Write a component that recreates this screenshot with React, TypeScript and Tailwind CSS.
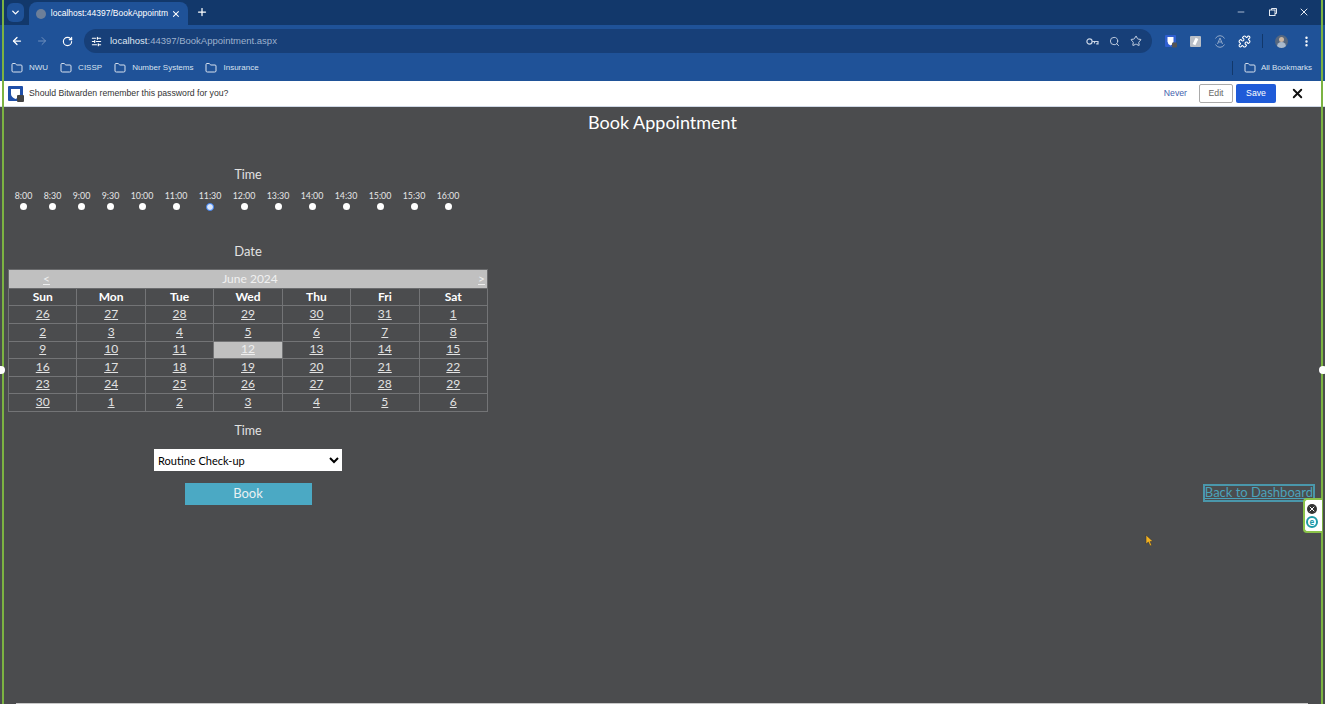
import React from 'react';
import { ArrowLeft, ArrowRight, RotateCw, Folder, ChevronDown, X, Plus, Minus, Search, Star, EllipsisVertical, SlidersHorizontal, Puzzle } from 'lucide-react';

const pageFont = "font-['Lato','Open_Sans',sans-serif]";

const times = [
  { label: '8:00', w: 'w-[29px]' },
  { label: '8:30', w: 'w-[29px]' },
  { label: '9:00', w: 'w-[29px]' },
  { label: '9:30', w: 'w-[29px]' },
  { label: '10:00', w: 'w-[34px]' },
  { label: '11:00', w: 'w-[34px]' },
  { label: '11:30', w: 'w-[34px]' },
  { label: '12:00', w: 'w-[34px]' },
  { label: '13:30', w: 'w-[34px]' },
  { label: '14:00', w: 'w-[34px]' },
  { label: '14:30', w: 'w-[34px]' },
  { label: '15:00', w: 'w-[34px]' },
  { label: '15:30', w: 'w-[34px]' },
  { label: '16:00', w: 'w-[34px]' },
];

const days = ['Sun', 'Mon', 'Tue', 'Wed', 'Thu', 'Fri', 'Sat'];

const weeks = [
  { h: 'h-[18px]', cells: [26, 27, 28, 29, 30, 31, 1] },
  { h: 'h-[18px]', cells: [2, 3, 4, 5, 6, 7, 8] },
  { h: 'h-[17px]', cells: [9, 10, 11, 12, 13, 14, 15] },
  { h: 'h-[18px]', cells: [16, 17, 18, 19, 20, 21, 22] },
  { h: 'h-[17px]', cells: [23, 24, 25, 26, 27, 28, 29] },
  { h: 'h-[18px]', cells: [30, 1, 2, 3, 4, 5, 6] },
];

const bookmarks = ['NWU', 'CISSP', 'Number Systems', 'Insurance'];

const BrowserChrome = () => {
  return (
    <div className="font-['Liberation_Sans',sans-serif] text-white">
      {/* tab strip */}
      <div className="h-[25px] bg-[#12386b] flex items-end pl-[7px]">
        <div className="w-[17px] h-[19px] mb-[3px] rounded-md bg-[#1f5298] flex items-center justify-center">
          <ChevronDown size={11} strokeWidth={3} />
        </div>
        <div className="ml-[5px] w-[159px] h-[23px] bg-[#1f5298] rounded-t-lg flex items-center pl-[7px] pr-[7px]">
          <div className="w-[10px] h-[10px] rounded-full bg-[#6d7f99]" />
          <span className="ml-[5px] text-[8.5px] whitespace-nowrap w-[122px]">localhost:44397/BookAppointm</span>
          <X size={10} strokeWidth={2.5} />
        </div>
        <Plus size={12} strokeWidth={2.5} className="ml-[8px] mb-[7px]" />
        <div className="ml-auto flex items-center mb-[7px]">
          <Minus size={10} className="text-[#c8d4e6]" />
          <svg className="ml-[22px]" width="10" height="10" viewBox="0 0 10 10" fill="none" stroke="#e4e9f1">
            <rect x="1.5" y="3" width="5.5" height="5.5" />
            <path d="M3.5 3 V1.5 H8.5 V6.5 H7" />
          </svg>
          <X size={12} className="ml-[20px] mr-[15px] text-[#e4e9f1]" />
        </div>
      </div>
      {/* toolbar */}
      <div className="h-[29px] bg-[#1f5298] flex items-center pl-[11px] pt-[3px]">
        <ArrowLeft size={12} strokeWidth={2.5} />
        <ArrowRight size={12} strokeWidth={2} className="ml-[13px] text-[#6f8fbd]" />
        <RotateCw size={11} strokeWidth={2.5} className="ml-[14px]" />
        <div className="ml-[11px] w-[1068px] h-[24px] rounded-full bg-[#173f78] flex items-center pl-[7px]">
          <SlidersHorizontal size={11} strokeWidth={2.5} />
          <span className="ml-[8px] text-[9.5px] text-[#dfe6f1]">localhost<span className="text-[#9db1cd]">:44397/BookAppointment.aspx</span></span>
          <div className="ml-auto flex items-center pr-[10px] text-[#c9d4e5]">
            <svg width="13" height="9" viewBox="0 0 13 9" fill="none" stroke="#c9d4e5" strokeWidth="1.2">
              <circle cx="3.5" cy="4.5" r="2.6" />
              <path d="M6.1 4.5 H12 V6.8 H10.2 M8.5 4.5 V6.5" />
            </svg>
            <Search size={11} className="ml-[10px]" />
            <Star size={12} className="ml-[10px]" />
          </div>
        </div>
        {/* extension icons */}
        <svg className="ml-[13px]" width="12" height="13" viewBox="0 0 12 13">
          <rect width="11" height="12" rx="1" fill="#2f5fd0" />
          <path d="M2.5 2 H8.5 V6.5 Q8.5 9 5.5 10.5 Q2.5 9 2.5 6.5 Z" fill="#fff" />
          <rect x="7" y="7.5" width="5" height="5" rx="1" fill="#555" />
        </svg>
        <div className="ml-[13px] w-[11px] h-[11px] rounded-[1px] bg-[#b9bec6] flex items-center justify-center">
          <div className="w-[3px] h-[7px] bg-white rotate-[25deg]" />
        </div>
        <svg className="ml-[13px]" width="12" height="13" viewBox="0 0 12 13" fill="none" stroke="#9db1cd" strokeWidth="0.9">
          <path d="M1.5 3.5 A5 5 0 0 1 10.5 3.5 M1.5 9.5 A5 5 0 0 0 10.5 9.5 M6 3 L3.5 9 M6 3 L8.5 9 M4.5 7 H7.5" />
        </svg>
        <Puzzle size={13} strokeWidth={2} className="ml-[12px]" />
        <div className="ml-[11px] w-px h-[14px] bg-[#12386b]" />
        <div className="relative ml-[12px] w-[13px] h-[13px] rounded-full bg-[#55677f] overflow-hidden">
          <div className="absolute left-[4px] top-[2px] w-[5px] h-[5px] rounded-full bg-[#c9b5a2]" />
          <div className="absolute left-[2px] top-[7px] w-[9px] h-[6px] rounded-t-full bg-[#a9b9cc]" />
        </div>
        <EllipsisVertical size={13} strokeWidth={2.5} className="ml-[12px]" />
      </div>
      {/* bookmarks */}
      <div className="h-[27px] bg-[#1f5298] flex items-center pl-[11px] pt-[1px] text-[8px] text-[#d9e2ef]">
        {bookmarks.map((name) => (
          <div key={name} className="flex items-center mr-[12px]">
            <Folder size={12} className="mr-[6px]" />
            <span>{name}</span>
          </div>
        ))}
        <div className="ml-auto w-px h-[14px] bg-[#12386b] mr-[11px]" />
        <Folder size={12} className="mr-[5px]" />
        <span className="mr-[13px]">All Bookmarks</span>
      </div>
    </div>
  );
};

const BitwardenBar = () => {
  return (
    <div className="h-[26px] bg-white border-b border-[#cfd8e6] flex items-center pl-[8px] pr-[20px] font-['Liberation_Sans',sans-serif] text-[8.7px] text-[#333]">
      <svg width="16" height="16" viewBox="0 0 16 16">
        <rect width="15" height="15" rx="1" fill="#1f4fa8" />
        <path d="M3 3 H12 V8 Q12 11 7.5 13 Q3 11 3 8 Z" fill="#fff" />
        <rect x="9" y="9" width="7" height="7" rx="1" fill="#444" />
      </svg>
      <span className="ml-[5px]">Should Bitwarden remember this password for you?</span>
      <span className="ml-auto text-[#3f62ad]">Never</span>
      <span className="ml-[12px] w-[34px] h-[19px] border border-[#aaa] rounded-[2px] flex items-center justify-center text-[#666]">Edit</span>
      <span className="ml-[3px] w-[40px] h-[19px] bg-[#1f5bd8] rounded-[2px] flex items-center justify-center text-white">Save</span>
      <X size={15} strokeWidth={3} className="ml-[14px] text-[#111]" />
    </div>
  );
};

const TimePicker = () => {
  return (
    <div className="flex ml-[9px] mt-[5px]">
      {times.map((t) => (
        <div key={t.label} className={`${t.w} flex flex-col items-center`}>
          <span className="text-[8.8px] leading-[13px] text-[#e6e6e6]">{t.label}</span>
          {t.label === '11:30' ? (
            <span className="mt-[1px] w-[8px] h-[8px] rounded-full bg-[#dbe7fb] border-[1.5px] border-[#3b82f6]" />
          ) : (
            <span className="mt-[1px] w-[7px] h-[7px] rounded-full bg-white" />
          )}
        </div>
      ))}
    </div>
  );
};

const Calendar = () => {
  return (
    <table className="ml-[8px] w-[480px] table-fixed border-collapse text-[#e2e2e2]">
      <thead>
        <tr>
          <th colSpan={7} className="h-[19px] p-0 bg-[#c0c0c0] border border-[#6a6b6d] font-normal text-[12px]">
            <div className="flex items-center px-[34px] pr-[2px]">
              <a className="underline text-[#eee]">&lt;</a>
              <span className="flex-1 text-center text-[#f0f0f0] pr-[28px]">June 2024</span>
              <a className="underline text-[#eee]">&gt;</a>
            </div>
          </th>
        </tr>
        <tr>
          {days.map((d) => (
            <th key={d} className="h-[17px] p-0 border border-[#737476] text-[12px] leading-none font-bold text-white">{d}</th>
          ))}
        </tr>
      </thead>
      <tbody>
        {weeks.map((week, i) => (
          <tr key={i}>
            {week.cells.map((day, j) => (
              <td
                key={j}
                className={`${week.h} px-0 pt-0 pb-[2px] border border-[#737476] text-center text-[12px] leading-none ${i === 2 && day === 12 ? 'bg-[#c0c0c0] text-[#eee]' : ''}`}
              >
                <a className="underline">{day}</a>
              </td>
            ))}
          </tr>
        ))}
      </tbody>
    </table>
  );
};

const App = () => {
  return (
    <div className="relative w-[1325px] h-[704px] overflow-hidden bg-[#4b4c4e] flex flex-col">
      <BrowserChrome />
      <BitwardenBar />

      <main className={`flex-1 ${pageFont} text-[#e2e2e2]`}>
        <h1 className="text-center text-[18px] leading-[22px] mt-[4px] text-white">Book Appointment</h1>
        <div className="flex items-end justify-between pr-[10px]">
          <div className="w-[496px]">
            <p className="mt-[33px] text-center text-[12.5px] leading-[18px]">Time</p>
            <TimePicker />
            <p className="mt-[31px] text-center text-[13px] leading-[18px]">Date</p>
            <div className="mt-[9px]"><Calendar /></div>
            <p className="mt-[10px] text-center text-[12.5px] leading-[18px]">Time</p>
            <div className="mt-[9px] flex justify-center">
              <select className="w-[188px] h-[22px] bg-white text-black text-[11px]" defaultValue="Routine Check-up">
                <option>Routine Check-up</option>
              </select>
            </div>
            <div className="mt-[12px] flex justify-center">
              <button className="w-[127px] h-[22px] bg-[#4ba9c4] text-[13px] text-[#e8f0f2]">Book</button>
            </div>
          </div>
          <a className="mb-[3px] border-2 border-[#4a97ab] h-[18px] leading-[13px] text-[13px] text-[#4ba3bb] underline">Back to Dashboard</a>
        </div>
      </main>

      {/* window frame lines */}
      <div className="absolute left-[2px] top-0 bottom-0 w-[2px] bg-[#7cb342]" />
      <div className="absolute left-[1321px] top-0 bottom-0 w-[2px] bg-[#7cb342]" />
      <div className="absolute left-[16px] right-[17px] bottom-0 h-px bg-[#c8c8c8]" />

      {/* extension badge at the right edge */}
      <div className="absolute left-[1303px] top-[498px] w-[19px] h-[35px] bg-white border-2 border-r-0 border-[#8bc34a] rounded-l-[4px] pr-[3px] flex flex-col items-center justify-center gap-[2px]">
        <div className="w-[10px] h-[10px] rounded-full bg-[#333] flex items-center justify-center"><X size={8} strokeWidth={3} className="text-white" /></div>
        <div className="w-[12px] h-[12px] rounded-full border-2 border-[#1e9aa8] text-[8px] leading-[8px] font-bold text-center text-[#1e9aa8]">e</div>
      </div>

      {/* window resize handles */}
      <div className="absolute left-[-3px] top-[366px] w-[8px] h-[8px] rounded-full bg-white" />
      <div className="absolute left-[1319px] top-[366px] w-[8px] h-[8px] rounded-full bg-white" />

      {/* mouse pointer */}
      <svg className="absolute left-[1145px] top-[534px]" width="9" height="13" viewBox="0 0 9 13">
        <path d="M1 1 L1 10 L3.4 8 L5 12 L6.6 11.2 L5.2 7.6 L8 7.4 Z" fill="#f2b01e" stroke="#3a3a3a" strokeWidth="0.6" />
      </svg>
    </div>
  );
};

export default App;
